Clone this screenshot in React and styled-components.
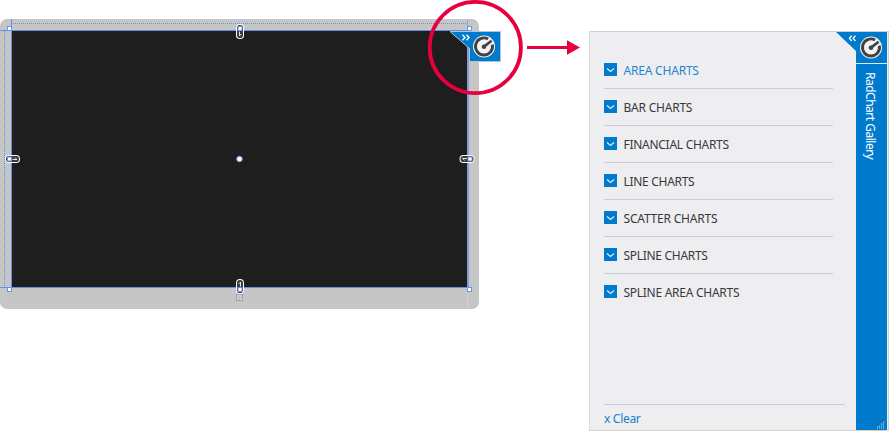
import React from "react";
import styled, { createGlobalStyle } from "styled-components";

const GlobalStyle = createGlobalStyle`
  * { box-sizing: border-box; }
  html, body { margin: 0; background: #fff; overflow: hidden; }
  body { font-family: "Noto Sans", "Open Sans", sans-serif; }
`;

const Page = styled.main`
  position: relative;
  display: flex;
  align-items: flex-start;
  justify-content: space-between;
  width: 889px;
  height: 431px;
`;

const Designer = styled.section`
  width: 479px;
  height: 290px;
  margin-top: 19px;
  padding: 12px 11px 22px 12px;
  border-radius: 7px;
  background: #c6c6c6;
`;

const Surface = styled.div`
  width: 456px;
  height: 256px;
  background: #1e1e1e;
`;

const Annotations = styled.svg`
  position: absolute;
  top: 0;
  left: 0;
  pointer-events: none;
`;

const Panel = styled.aside`
  display: flex;
  width: 300px;
  height: 400px;
  margin-top: 31px;
  border: 1px solid #d3d3c9;
  border-left-color: #deded4;
  background: #eeeef0;
`;

const Content = styled.div`
  display: flex;
  flex-direction: column;
  width: 266px;
  padding: 20px 0 0 14px;
`;

const ChartList = styled.ul`
  width: 229px;
  margin: 0;
  padding: 0;
  list-style: none;
`;

const ChartRow = styled.li`
  display: flex;
  align-items: flex-start;
  height: 37px;
  padding-top: 11px;
  border-bottom: 1px solid ${(p) => (p.$last ? "transparent" : "#cbcbdd")};
`;

const Toggle = styled.span`
  display: flex;
  width: 13px;
  height: 13px;
  background: #007acc;
`;

const Label = styled.span`
  margin-left: 6.5px;
  margin-top: -1px;
  color: ${(p) => (p.$active ? "#1c86d1" : "#38383b")};
  font-size: 12px;
  line-height: 17px;
  letter-spacing: ${(p) => p.$spacing}px;
  white-space: nowrap;
`;

const Footer = styled.footer`
  width: 241px;
  height: 26px;
  margin-top: auto;
  padding-top: 5px;
  border-top: 1px solid #cbcbdd;
  color: #1681cf;
  font-size: 12px;
  line-height: 17px;
  letter-spacing: -0.3px;
`;

const SideTab = styled.div`
  display: flex;
  flex-direction: column;
  width: 31px;
  background: #007acc;
`;

const TabHeader = styled.div`
  height: 32px;
  border-bottom: 1px solid #d5eaf8;
`;

const TabTitle = styled.span`
  align-self: flex-start;
  margin: 8px 0 0 6px;
  color: #fff;
  font-size: 12px;
  line-height: 17px;
  letter-spacing: -0.5px;
  writing-mode: vertical-rl;
  white-space: nowrap;
`;

const GripSlot = styled.div`
  display: flex;
  justify-content: flex-end;
  margin-top: auto;
  padding: 0 1px 1px 0;
`;

const charts = [
  ["AREA CHARTS", -0.2],
  ["BAR CHARTS", -0.22],
  ["FINANCIAL CHARTS", -0.28],
  ["LINE CHARTS", -0.3],
  ["SCATTER CHARTS", -0.2],
  ["SPLINE CHARTS", -0.3],
  ["SPLINE AREA CHARTS", -0.27],
];

function Chevron() {
  return (
    <svg width="13" height="13" viewBox="0 0 13 13">
      <path d="M3 5.5 6.5 8.5 10 5.5" fill="none" stroke="#d9f0ff" strokeWidth="1.2" />
    </svg>
  );
}

function Dial({ x, y }) {
  return (
    <g transform={`translate(${x} ${y})`}>
      <circle r="11" fill="#f4f4f4" />
      <path d="M4.1 -7.5A8.5 8.5 0 1 0 8.3 -1.9" fill="none" stroke="#424242" strokeWidth="2.9" />
      <path d="M0 .1 7.5 -5.7" stroke="#f4f4f4" strokeWidth="5" />
      <path d="M0 .1 7.6 -5.7" stroke="#424242" strokeWidth="2.6" />
      <circle cy=".2" r="2.3" fill="#424242" />
    </g>
  );
}

function Link({ x, y, angle }) {
  return (
    <g transform={`translate(${x} ${y}) rotate(${angle})`}>
      <rect x="-7.5" y="-4" width="15" height="8" rx="3.8" fill="#fff" />
      <rect x="-6.5" y="-3" width="13" height="6" rx="2.8" fill="#3c3c3c" />
      <path d="M0 .5H4.5M2.5 -1.3 4.3 .5" fill="none" stroke="#e4e4e4" strokeWidth="1" />
      <rect x="-5" y="-2" width="4" height="4" fill="#fff" stroke="#6495ed" />
    </g>
  );
}

function Handle({ x, y }) {
  return <rect x={x} y={y} width="4" height="4" fill="#fff" stroke="#6495ed" />;
}

function DesignMarks() {
  return (
    <Annotations width="889" height="431" viewBox="0 0 889 431">
      <path d="M0 30.5H470M0 287.5H470M11.5 19V289" stroke="#6490e0" />
      <path d="M467.5 20V30" stroke="#7fa3e5" />
      <path d="M468 31V289" stroke="#809fd6" strokeWidth="2" />
      <path d="M467.5 290V308" stroke="#d2d2d2" />
      <path d="M13 23.5H467" stroke="#6490e0" strokeDasharray="1 1" />
      <path d="M4.5 31V287" stroke="#6490e0" strokeDasharray="1 1" />
      <Handle x={7.5} y={26.5} />
      <Handle x={467.5} y={26.5} />
      <Handle x={7.5} y={287.5} />
      <Handle x={467.5} y={287.5} />
      <Link x={240} y={31.5} angle={90} />
      <Link x={12.5} y={159} angle={0} />
      <Link x={467} y={159} angle={180} />
      <Link x={240} y={286.5} angle={270} />
      <g fill="#d1d1d1" stroke="#a2a2a2">
        <rect x="236.5" y="294.5" width="6" height="6" />
        <path d="M239.5 296V300M238 297.5H242" stroke="#bbb" />
      </g>
      <circle cx="239.5" cy="159" r="2.8" fill="#fff" stroke="#6490e0" />

      <path d="M450 31.5H500.5V61.5H469.5V48.5Z" fill="#007acc" stroke="#b6c5d5" />
      <path d="M462.5 34.7 465 37.5 462.5 40.3M466.5 34.7 469 37.5 466.5 40.3" fill="none" stroke="#fff" strokeWidth="1.4" />
      <Dial x={484} y={46.5} />
      <circle cx="475.3" cy="47.5" r="45.6" fill="none" stroke="#e6003e" strokeWidth="3.8" />
      <path d="M527 47.5H569" stroke="#e6003e" strokeWidth="2.8" />
      <path d="M567 40.3 580 47.5 567 54.8Z" fill="#e6003e" />

      <path d="M836 32H856V51Z" fill="#007acc" />
      <path d="M851.7 35.6 849.5 38.3 851.7 41M855.4 35.6 853.2 38.3 855.4 41" fill="none" stroke="#fff" strokeWidth="1.3" />
      <Dial x={871} y={47.5} />
    </Annotations>
  );
}

function Grip() {
  return (
    <svg width="10" height="9" viewBox="0 0 10 9">
      <path d="M1.5 6V9M3.5 5V9M5.5 3V9M7.5 1V9" stroke="#68a9d8" />
      <path d="M0 5.5H2M2 3.5H4M4 1.5H6M6 .5H8" stroke="#0869ac" />
    </svg>
  );
}

export default function App() {
  return (
    <>
      <GlobalStyle />
      <Page>
        <Designer><Surface /></Designer>
        <Panel>
          <Content>
            <ChartList>
              {charts.map(([name, spacing], i) => (
                <ChartRow key={name} $last={i === charts.length - 1}>
                  <Toggle><Chevron /></Toggle>
                  <Label $active={i === 0} $spacing={spacing}>{name}</Label>
                </ChartRow>
              ))}
            </ChartList>
            <Footer>x Clear</Footer>
          </Content>
          <SideTab>
            <TabHeader />
            <TabTitle>RadChart Gallery</TabTitle>
            <GripSlot><Grip /></GripSlot>
          </SideTab>
        </Panel>
        <DesignMarks />
      </Page>
    </>
  );
}
